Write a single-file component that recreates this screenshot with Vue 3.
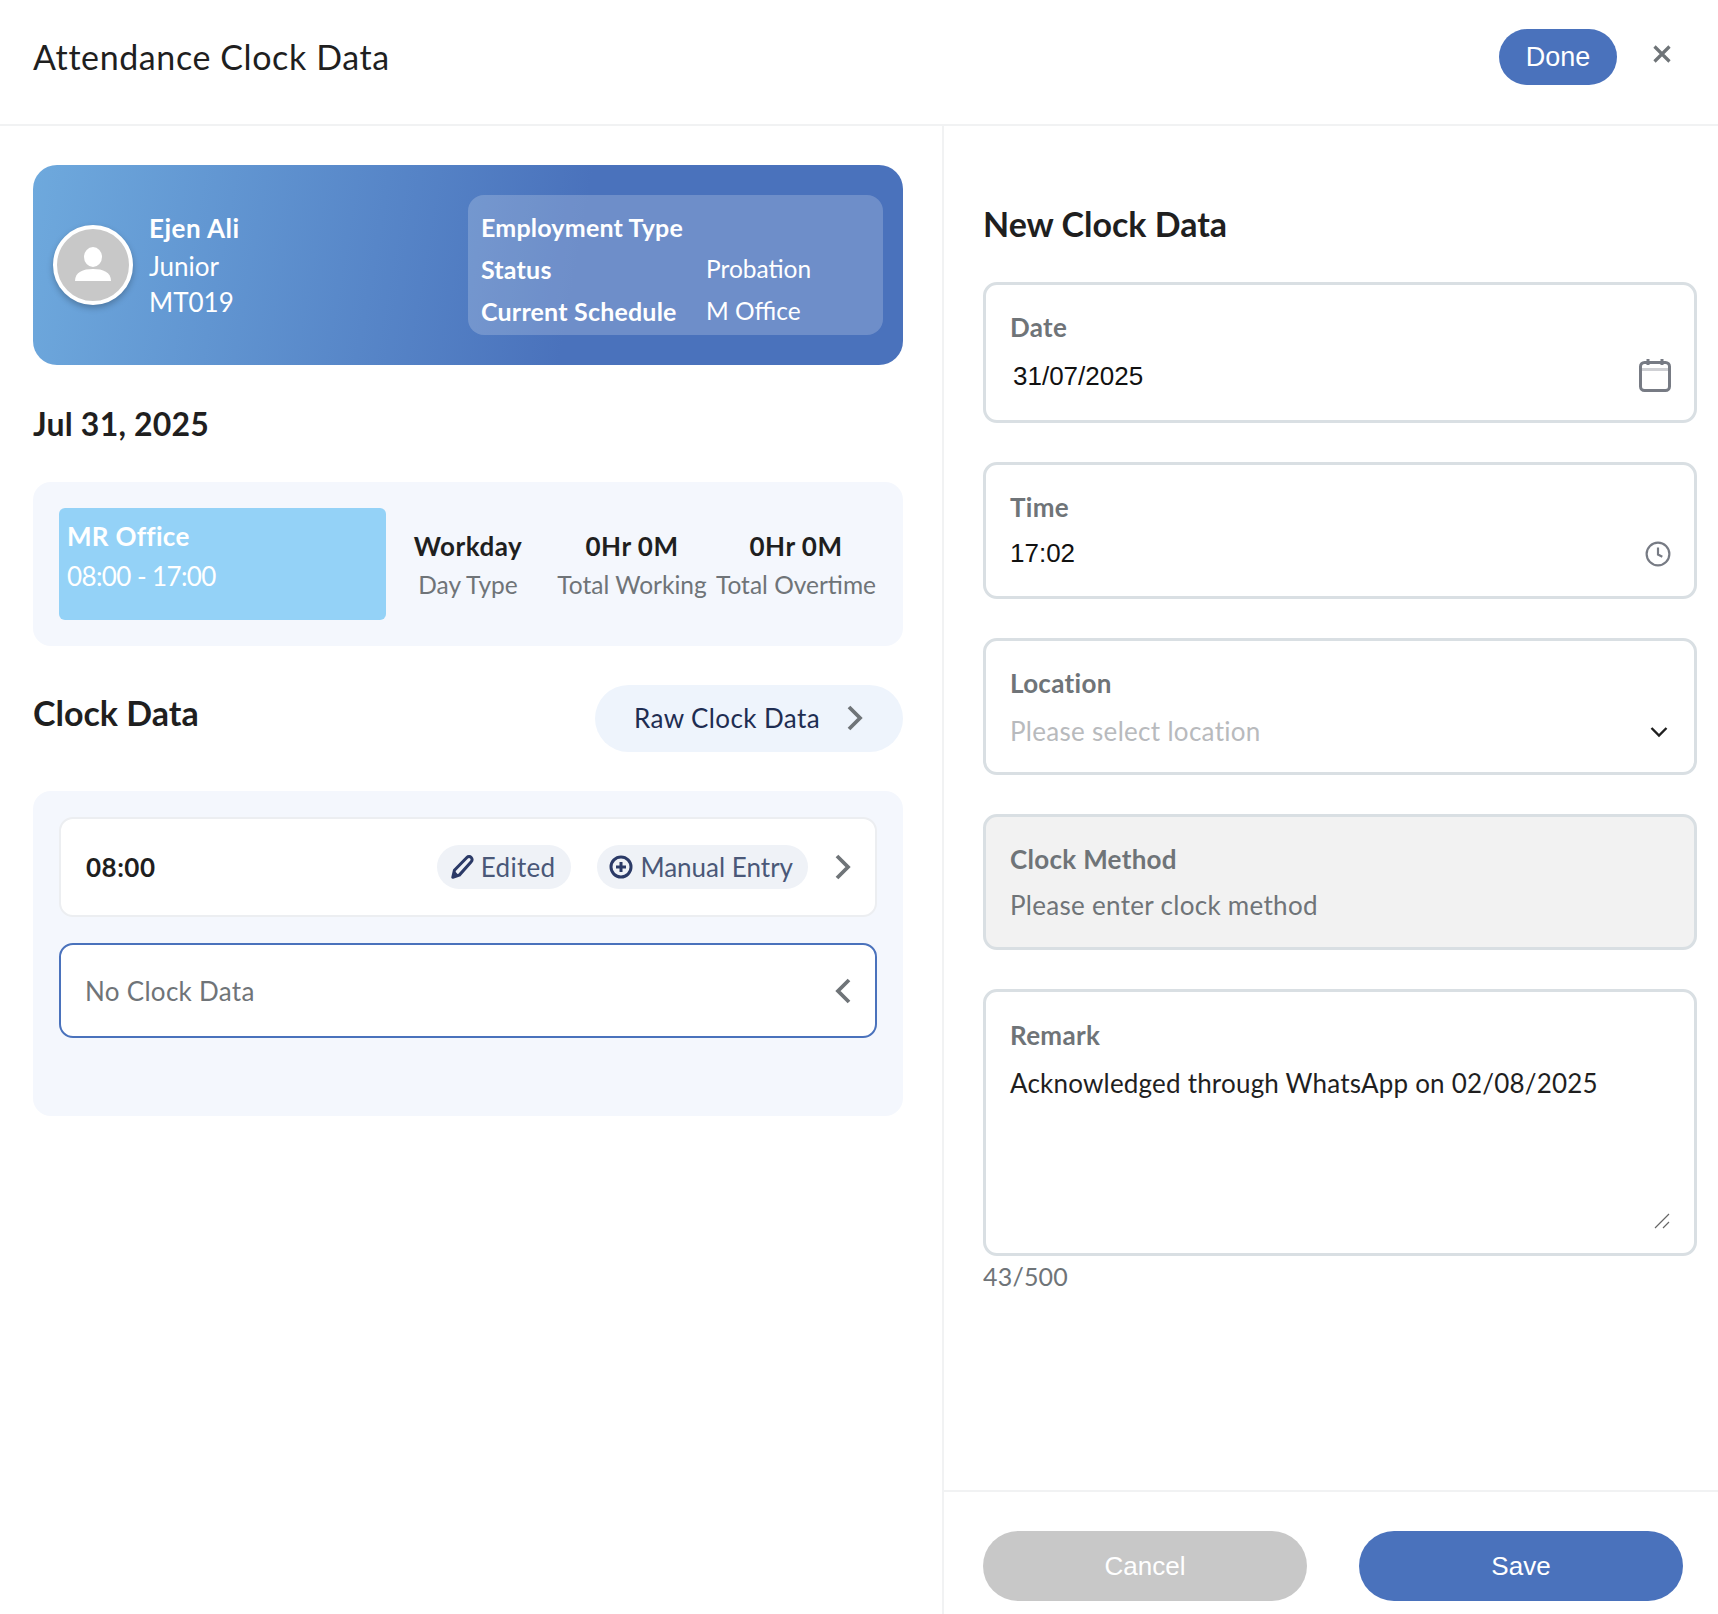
<script setup>
const stats = [
  { value: 'Workday', label: 'Day Type' },
  { value: '0Hr 0M', label: 'Total Working' },
  { value: '0Hr 0M', label: 'Total Overtime' },
]
</script>

<template>
  <div class="page">
    <header class="top">
      <h1>Attendance Clock Data</h1>
      <button class="done">Done</button>
      <svg class="close" width="20" height="20" viewBox="0 0 20 20"><path d="M2.500 2.500l15 15M17.500 2.500l-15 15" stroke="#6f7478" stroke-width="3.200" fill="none"/></svg>
    </header>
    <div class="body">
      <section class="left">
        <div class="hero">
          <div class="avatar">
            <svg width="44" height="44" viewBox="0 0 44 44"><ellipse cx="22" cy="14" rx="9" ry="10" fill="#fff"/><path d="M4 38c0-9 8-12 18-12s18 3 18 12z" fill="#fff"/></svg>
          </div>
          <div class="who">
            <strong>Ejen Ali</strong>
            <span>Junior</span>
            <span>MT019</span>
          </div>
          <div class="emp">
            <strong>Employment Type</strong><span></span>
            <strong>Status</strong><span>Probation</span>
            <strong>Current Schedule</strong><span>M Office</span>
          </div>
        </div>

        <h2 class="date">Jul 31, 2025</h2>

        <div class="summary">
          <div class="shift">
            <strong>MR Office</strong>
            <span>08:00 - 17:00</span>
          </div>
          <div v-for="s in stats" :key="s.label" class="stat">
            <strong>{{ s.value }}</strong>
            <span>{{ s.label }}</span>
          </div>
        </div>

        <div class="clock-head">
          <h2>Clock Data</h2>
          <button class="raw">
            Raw Clock Data
            <svg width="18" height="28" viewBox="0 0 18 28"><path d="M3 3l11 11-11 11" stroke="#6f7478" stroke-width="3.800" fill="none"/></svg>
          </button>
        </div>

        <div class="clock-list">
          <div class="row">
            <strong class="time">08:00</strong>
            <span class="chip edited">
              <svg width="26" height="26" viewBox="0 0 24 24"><path d="M3.500 21.500l1.500-6.500L16.500 3.200c1.200-1.200 3-1 4 0s1.200 2.800 0 4L9.500 19.500z" fill="none" stroke="#2b3a67" stroke-width="2.800" stroke-linejoin="round"/><path d="M3.500 21.500l1.500-6 4.500 4.500z" fill="#2b3a67"/></svg>
              Edited
            </span>
            <span class="chip">
              <svg width="24" height="24" viewBox="0 0 24 24"><circle cx="12" cy="12" r="10" fill="none" stroke="#2b3a67" stroke-width="3"/><path d="M12 7v10M7 12h10" stroke="#2b3a67" stroke-width="3"/></svg>
              Manual Entry
            </span>
            <svg class="chev" width="18" height="28" viewBox="0 0 18 28"><path d="M3 3l11 11-11 11" stroke="#6f7478" stroke-width="3.800" fill="none"/></svg>
          </div>
          <div class="row open">
            <span class="none">No Clock Data</span>
            <svg class="chev" width="18" height="28" viewBox="0 0 18 28"><path d="M15 3L4 14l11 11" stroke="#6f7478" stroke-width="3.800" fill="none"/></svg>
          </div>
        </div>
      </section>

      <section class="right">
        <div class="form">
          <h2>New Clock Data</h2>
          <div class="field f-date">
            <label>Date</label>
            <div class="val helv indent">31/07/2025</div>
            <svg class="ico" width="32" height="34" viewBox="0 0 32 34"><rect x="1.500" y="4.500" width="29" height="28" rx="4" fill="none" stroke="#777b84" stroke-width="3"/><rect x="3" y="10" width="26" height="3" fill="#cfd0d4"/><path d="M9 1v6M23 1v6" stroke="#777b84" stroke-width="3"/></svg>
          </div>
          <div class="field f-short f-time">
            <label>Time</label>
            <div class="val helv">17:02</div>
            <svg class="ico clock" width="26" height="26" viewBox="0 0 24 24"><circle cx="12" cy="12" r="10.500" fill="none" stroke="#777b84" stroke-width="2"/><path d="M12 6v6.500l4 2" fill="none" stroke="#777b84" stroke-width="2"/></svg>
          </div>
          <div class="field f-short">
            <label>Location</label>
            <div class="val ph">Please select location</div>
            <svg class="ico caret" width="18" height="12" viewBox="0 0 18 12"><path d="M1.500 2l7.500 7.500L16.500 2" fill="none" stroke="#1f1f1f" stroke-width="2.400"/></svg>
          </div>
          <div class="field f-short disabled">
            <label>Clock Method</label>
            <div class="val muted">Please enter clock method</div>
          </div>
          <div class="field f-remark">
            <label>Remark</label>
            <div class="val remark">Acknowledged through WhatsApp on 02/08/2025</div>
            <svg class="grip" width="16" height="16" viewBox="0 0 16 16"><path d="M1 15L15 1M9 15l6-6" stroke="#666" stroke-width="1.200"/></svg>
          </div>
          <div class="count">43/500</div>
        </div>
        <footer class="foot">
          <button class="btn cancel">Cancel</button>
          <button class="btn save">Save</button>
        </footer>
      </section>
    </div>
  </div>
</template>

<style>
html, body { margin: 0; background: #fff; }
</style>

<style scoped>
* { box-sizing: border-box; }
.page {
  width: 1718px;
  height: 1614px;
  display: flex;
  flex-direction: column;
  overflow: hidden;
  font-family: "Lato", "Noto Sans", sans-serif;
  font-size: 26px;
  color: #1f1f1f;
}
h1, h2 { margin: 0; }
button { border: 0; font-family: "Liberation Sans", sans-serif; }
.top {
  height: 126px;
  flex: none;
  display: flex;
  align-items: center;
  padding: 0 46px 10px 33px;
  border-bottom: 2px solid #f1f2f3;
}
.top h1 { font-size: 34px; font-weight: 400; flex: 1; letter-spacing: .6px; margin-bottom: 2px; }
.done {
  width: 118px; height: 56px; border-radius: 28px;
  background: #4a72bc; color: #fff; font-size: 27px; margin-right: 35px; padding: 0;
}
.close { margin-bottom: 6px; }
.body { flex: 1; display: grid; grid-template-columns: 944px 1fr; min-height: 0; }
.left { padding: 39px 39px 0 33px; border-right: 2px solid #f1f2f3; }
.hero {
  height: 200px;
  border-radius: 24px;
  background: linear-gradient(100deg, #6ea9dd 0%, #4a72bc 62%);
  display: flex;
  align-items: center;
  padding: 0 20px;
  color: #fff;
}
.avatar {
  width: 80px; height: 80px; border-radius: 50%;
  background: #c8c8c8; border: 4px solid #fff;
  box-shadow: 0 3px 6px rgba(0,0,0,.25);
  display: flex; align-items: center; justify-content: center;
  flex: none;
}
.who { display: flex; flex-direction: column; margin-left: 16px; width: 319px; line-height: 36px; }
.who strong { font-weight: 700; letter-spacing: .5px; margin-bottom: 2px; }
.emp strong { font-weight: 700; letter-spacing: .2px; }
.emp {
  flex: 1;
  height: 140px;
  border-radius: 16px;
  background: rgba(255,255,255,.2);
  display: grid;
  grid-template-columns: 225px 1fr;
  align-content: center;
  padding: 7px 13px 0;
  line-height: 42px;
  font-size: 25px;
}
.emp span { font-size: 24.500px; }
.date { font-size: 32px; font-weight: 700; margin-top: 39px; line-height: 40px; letter-spacing: .2px; }
.summary {
  height: 164px; margin-top: 38px;
  background: #f4f7fd; border-radius: 18px;
  padding: 26px;
  display: grid;
  grid-template-columns: 327px 164px 164px 164px;
  align-items: center;
  text-align: center;
}
.shift {
  align-self: stretch;
  background: #94d2f7; border-radius: 6px; color: #fff;
  text-align: left; padding: 8px;
  display: flex; flex-direction: column; line-height: 40px;
}
.shift strong { letter-spacing: .3px; }
.shift span { letter-spacing: -.6px; }
.stat { display: flex; flex-direction: column; line-height: 40px; white-space: nowrap; align-items: center; padding-top: 2px; }
.stat strong { letter-spacing: .5px; }
.stat span { color: #6f7478; font-size: 24.500px; margin-top: -1px; }
.clock-head { display: flex; align-items: flex-start; justify-content: space-between; margin-top: 39px; }
.clock-head h2 { font-size: 34px; margin-top: 8px; line-height: 40px; }
.raw {
  width: 308px; height: 67px; border-radius: 34px;
  background: #eef4fc; color: #1e2d52;
  font-family: "Lato", sans-serif; font-size: 26px; letter-spacing: .4px;
  display: flex; align-items: center; justify-content: center; gap: 26px; padding: 0 0 2px;
}
.clock-list {
  height: 325px; margin-top: 39px;
  background: #f4f7fd; border-radius: 18px;
  padding: 26px;
  display: flex; flex-direction: column; gap: 26px;
}
.row {
  height: 100px; background: #fff; border: 2px solid #eceef1; border-radius: 14px;
  display: flex; align-items: center; padding: 0 24px;
}
.row.open { height: 95px; border-color: #4a72bc; justify-content: space-between; }
.time { flex: 1; font-weight: 700; letter-spacing: .5px; padding-left: 1px; }
.chip {
  height: 44px; border-radius: 22px; background: #eff2f7; color: #4a5878;
  display: flex; align-items: center; gap: 7px; padding: 0 15px 0 12px; margin-right: 26px;
}
.edited { gap: 6px; padding-right: 16px; letter-spacing: .3px; }
.chev { flex: none; margin-right: -1px; }
.none { color: #6f7478; letter-spacing: .3px; }
.right { display: flex; flex-direction: column; min-width: 0; }
.form { flex: 1; padding: 78px 21px 0 39px; }
.form h2 { font-size: 34px; line-height: 40px; margin-bottom: 38px; }
.field {
  position: relative;
  border: 3px solid #d9dfe3; border-radius: 14px;
  padding: 24px 24px 0;
  margin-bottom: 39px;
}
.f-date { height: 141px; }
.f-short { height: 137px; }
.disabled { height: 136px; }
.f-remark { height: 267px; margin-bottom: 0; padding-top: 25px; }
.field label { display: block; color: #6f7478; font-weight: 700; line-height: 36px; font-size: 26px; letter-spacing: .3px; }
.val { margin-top: 12px; line-height: 36px; letter-spacing: .3px; }
.remark { letter-spacing: .2px; }
.helv { font-family: "Liberation Sans", sans-serif; font-size: 26px; color: #111; letter-spacing: 0; }
.indent { margin: 13px 0 0 3px; }
.f-time .val { margin-top: 10px; }
.ph { color: #b8babd; }
.muted { color: #6f7478; margin-top: 10px; }
.disabled { background: #f2f2f2; }
.ico { position: absolute; right: 23px; }
.f-date .ico { top: 73px; }
.clock { top: 76px; right: 23px; }
.caret { top: 85px; right: 26px; }
.grip { position: absolute; right: 24px; bottom: 24px; }
.count { color: #6f7478; font-size: 25px; margin-top: 5px; letter-spacing: .2px; }
.foot {
  flex: none; height: 124px;
  border-top: 2px solid #f1f2f3;
  display: flex; gap: 52px; padding: 39px 0 0 39px;
}
.btn { width: 324px; height: 70px; border-radius: 35px; color: #fff; font-size: 26px; }
.cancel { background: #c8c8c8; }
.save { background: #4a72bc; }
</style>
